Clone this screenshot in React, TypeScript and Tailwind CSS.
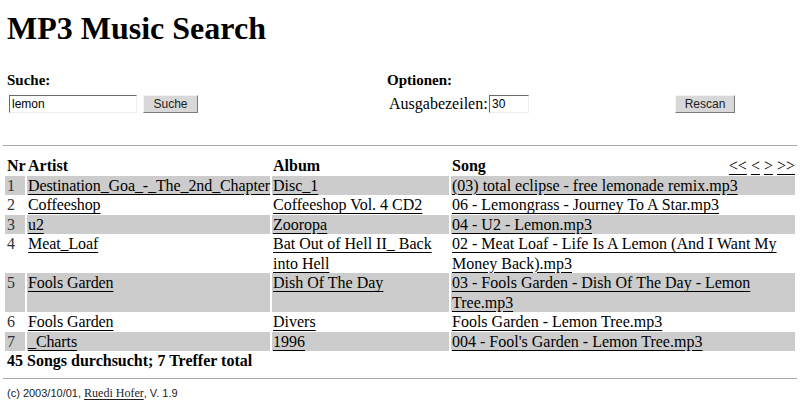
import React from 'react';

const serif = { fontFamily: '"Liberation Serif", "Times New Roman", serif' };

interface Row {
  nr: number;
  artist: string;
  album: string;
  song: string;
}

const ROWS: Row[] = [
  { nr: 1, artist: 'Destination_Goa_-_The_2nd_Chapter', album: 'Disc_1', song: '(03) total eclipse - free lemonade remix.mp3' },
  { nr: 2, artist: 'Coffeeshop', album: 'Coffeeshop Vol. 4 CD2', song: '06 - Lemongrass - Journey To A Star.mp3' },
  { nr: 3, artist: 'u2', album: 'Zooropa', song: '04 - U2 - Lemon.mp3' },
  { nr: 4, artist: 'Meat_Loaf', album: 'Bat Out of Hell II_ Back into Hell', song: '02 - Meat Loaf - Life Is A Lemon (And I Want My Money Back).mp3' },
  { nr: 5, artist: 'Fools Garden', album: 'Dish Of The Day', song: '03 - Fools Garden - Dish Of The Day - Lemon Tree.mp3' },
  { nr: 6, artist: 'Fools Garden', album: 'Divers', song: 'Fools Garden - Lemon Tree.mp3' },
  { nr: 7, artist: '_Charts', album: '1996', song: "004 - Fool's Garden - Lemon Tree.mp3" },
];

const OldButton: React.FC<{ label: string; className?: string }> = ({ label, className }) => (
  <button
    className={
      'h-[18px] bg-[#d8d8d8] border border-t-[#f4f4f4] border-l-[#f4f4f4] border-r-[#7a7a7a] border-b-[#7a7a7a] text-[12px] leading-none text-[#222] font-["Liberation_Sans",Arial,sans-serif] ' +
      (className ?? '')
    }
  >
    {label}
  </button>
);

const OldInput: React.FC<{ value: string; className?: string }> = ({ value, className }) => (
  <input
    readOnly
    value={value}
    className={
      'h-[18px] bg-white border border-t-[#6a6a6a] border-l-[#6a6a6a] border-r-[#eeeeee] border-b-[#eeeeee] px-[2px] text-[12px] text-black font-["Liberation_Sans",Arial,sans-serif] outline-none ' +
      (className ?? '')
    }
  />
);

export default function App() {
  return (
    <div className="w-[800px] h-[409px] bg-white text-black px-[3px] pt-[10px] overflow-hidden" style={serif}>
      <h1 className="ml-[4px] text-[32px] leading-[37px] font-bold">MP3 Music Search</h1>

      <div className="flex mt-[24px]">
        <div className="w-[380px] ml-[4px]">
          <div className="text-[15px] leading-[18px] font-bold">Suche:</div>
          <div className="flex items-center mt-[6px] ml-[2px]">
            <OldInput value="lemon" className="w-[128px]" />
            <OldButton label="Suche" className="ml-[6px] w-[55px]" />
          </div>
        </div>
        <div>
          <div className="text-[15px] leading-[18px] font-bold">Optionen:</div>
          <div className="flex items-center mt-[6px] ml-[2px]">
            <span className="w-[100px] text-[16px] leading-[18px]">Ausgabezeilen:</span>
            <OldInput value="30" className="w-[40px]" />
            <OldButton label="Rescan" className="ml-[146px] w-[60px]" />
          </div>
        </div>
      </div>

      <div className="mt-[32px] border-t border-[#a8a8a8]" />

      <table className="mt-[10px] w-[794px] border-separate border-spacing-x-[2px] border-spacing-y-0 text-[16px] leading-[19.5px] table-fixed">
        <colgroup>
          <col className="w-[20px]" />
          <col className="w-[243px]" />
          <col className="w-[177px]" />
          <col className="w-[344px]" />
        </colgroup>
        <thead>
          <tr className="font-bold text-left align-top">
            <th className="pl-[2px] font-bold">Nr</th>
            <th className="pl-[1px] font-bold">Artist</th>
            <th className="pl-[1px] font-bold">Album</th>
            <th className="pl-[1px] font-bold">
              <div className="flex justify-between">
                <span>Song</span>
                <span className="font-normal whitespace-pre">
                  <a className="underline underline-offset-[3px]">&lt;&lt;</a> <a className="underline underline-offset-[3px]">&lt;</a>{' '}
                  <a className="underline underline-offset-[3px]">&gt;</a> <a className="underline underline-offset-[3px]">&gt;&gt;</a>
                </span>
              </div>
            </th>
          </tr>
        </thead>
        <tbody>
          {ROWS.map((r) => {
            const bg = r.nr % 2 === 1 ? 'bg-[#cccccc]' : 'bg-white';
            return (
              <tr key={r.nr} className="align-top">
                <td className={`${bg} pl-[2px] text-[#333]`}>{r.nr}</td>
                <td className={`${bg} pl-[1px] whitespace-nowrap`}>
                  <a className="underline underline-offset-[3px] tracking-[-0.1px]">{r.artist}</a>
                </td>
                <td className={`${bg} pl-[1px]`}>
                  <a className="underline underline-offset-[3px]">{r.album}</a>
                </td>
                <td className={`${bg} pl-[1px]`}>
                  <a className="underline underline-offset-[3px]">{r.song}</a>
                </td>
              </tr>
            );
          })}
        </tbody>
      </table>

      <div className="ml-[4px] text-[16px] leading-[19px] font-bold">45 Songs durchsucht; 7 Treffer total</div>

      <div className="mt-[8px] border-t border-[#a8a8a8]" />

      <div className="mt-[7px] ml-[4px] text-[11px] leading-[14px] text-[#222] font-['Liberation_Sans',Arial,sans-serif]">
        (c) 2003/10/01,{' '}
        <a className="underline underline-offset-2 text-[12px]" style={serif}>
          Ruedi Hofer
        </a>
        , V. 1.9
      </div>
    </div>
  );
}
